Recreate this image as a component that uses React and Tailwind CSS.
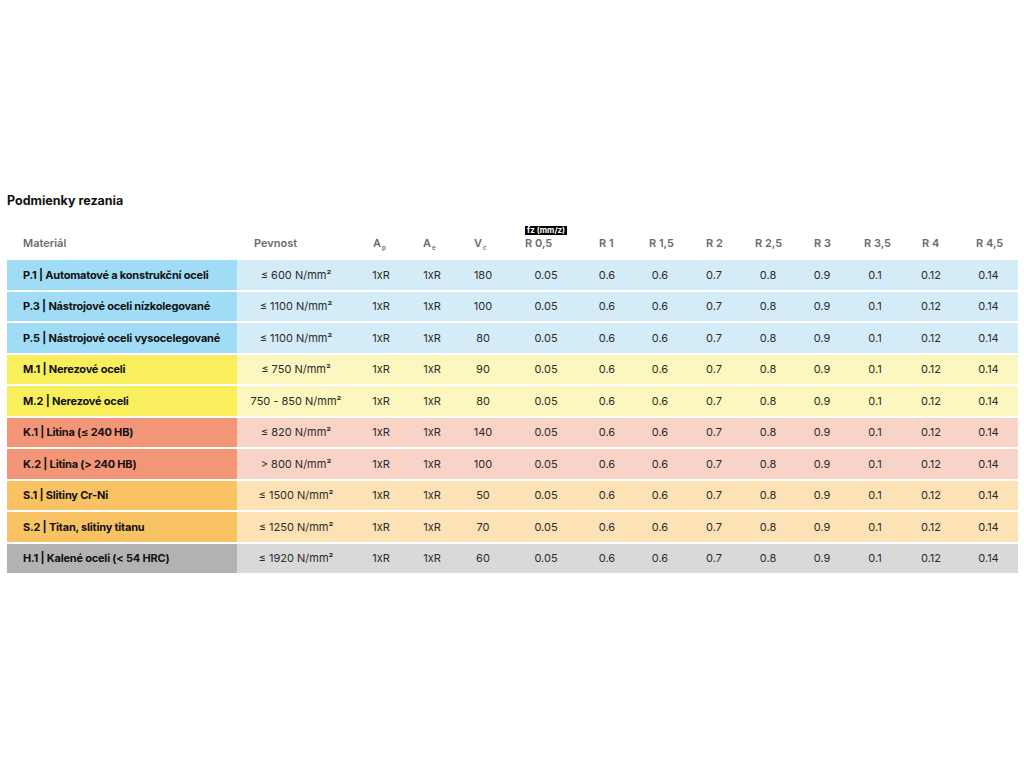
import React from "react";

const COLS =
  "grid grid-cols-[230px_118px_52px_50px_52px_74px_48px_58px_50px_58px_50px_56px_56px_59px]";

const GROUPS = {
  P: { mat: "bg-[#a0dcf5]", val: "bg-[#d4ecf8]" },
  M: { mat: "bg-[#f9ef5c]", val: "bg-[#fcf7bf]" },
  K: { mat: "bg-[#f39677]", val: "bg-[#f9d3c6]" },
  S: { mat: "bg-[#f9c363]", val: "bg-[#fde2b5]" },
  H: { mat: "bg-[#b2b2b2]", val: "bg-[#d9d9d9]" },
};

const FZ = ["0.05", "0.6", "0.6", "0.7", "0.8", "0.9", "0.1", "0.12", "0.14"];

const ROWS = [
  { g: "P", name: "P.1 | Automatové a konstrukční oceli", strength: "≤ 600 N/mm²", vc: "180" },
  { g: "P", name: "P.3 | Nástrojové oceli nízkolegované", strength: "≤ 1100 N/mm²", vc: "100" },
  { g: "P", name: "P.5 | Nástrojové oceli vysocelegované", strength: "≤ 1100 N/mm²", vc: "80" },
  { g: "M", name: "M.1 | Nerezové oceli", strength: "≤ 750 N/mm²", vc: "90" },
  { g: "M", name: "M.2 | Nerezové oceli", strength: "750 - 850 N/mm²", vc: "80" },
  { g: "K", name: "K.1 | Litina (≤ 240 HB)", strength: "≤ 820 N/mm²", vc: "140" },
  { g: "K", name: "K.2 | Litina (> 240 HB)", strength: "> 800 N/mm²", vc: "100" },
  { g: "S", name: "S.1 | Slitiny Cr-Ni", strength: "≤ 1500 N/mm²", vc: "50" },
  { g: "S", name: "S.2 | Titan, slitiny titanu", strength: "≤ 1250 N/mm²", vc: "70" },
  { g: "H", name: "H.1 | Kalené oceli (< 54 HRC)", strength: "≤ 1920 N/mm²", vc: "60" },
];

const R_HEADERS = ["R 1", "R 1,5", "R 2", "R 2,5", "R 3", "R 3,5", "R 4", "R 4,5"];
const R_PAD = ["pl-4", "pl-[18px]", "pl-[17px]", "pl-4", "pl-[17px]", "pl-[17px]", "pl-[19px]", "pl-[17px]"];

const Sub = ({ base, sub }) => (
  <span>
    {base}
    <sub className="text-[6px] align-baseline relative top-[3px] ml-[1px]">{sub}</sub>
  </span>
);

export default function App() {
  return (
    <div
      className="h-screen bg-white flex flex-col justify-center px-[7px] pb-[2px]"
      style={{ fontFamily: "Inter, 'Liberation Sans', sans-serif" }}
    >
      <h2 className="text-[12.5px] font-bold text-[#111] leading-[16px]">
        Podmienky rezania
      </h2>

      {/* Header */}
      <div
        className={`${COLS} mt-[17px] h-[32px] items-end pb-[9px] text-[11px] font-semibold text-[#6b6b6b] leading-[12px]`}
      >
        <div className="pl-4">Materiál</div>
        <div className="pl-[17px]">Pevnost</div>
        <div className="pl-[18px]"><Sub base="A" sub="p" /></div>
        <div className="pl-4"><Sub base="A" sub="e" /></div>
        <div className="pl-[17px]"><Sub base="V" sub="c" /></div>
        <div className="pl-4 flex flex-col items-start">
          <span className="bg-black text-white text-[8px] font-bold leading-[9px] px-[2px] mb-[2px] whitespace-nowrap">
            fz (mm/z)
          </span>
          <span>R 0,5</span>
        </div>
        {R_HEADERS.map((h, i) => (
          <div key={h} className={R_PAD[i]}>
            {h}
          </div>
        ))}
      </div>

      {/* Body */}
      <div className="mt-[2px] flex flex-col gap-[2px]">
        {ROWS.map((r) => {
          const c = GROUPS[r.g];
          return (
            <div
              key={r.name}
              className={`${COLS} h-[29.5px] items-stretch text-[11px] leading-[12px] text-[#2b2b2b]`}
            >
              <div className={`${c.mat} pl-4 flex items-center font-bold text-[#111] text-[11px] whitespace-nowrap tracking-[-0.2px]`}>
                {r.name}
              </div>
              <div className={`${c.val} flex items-center justify-center whitespace-nowrap`}>
                {r.strength}
              </div>
              <div className={`${c.val} flex items-center justify-center`}>1xR</div>
              <div className={`${c.val} flex items-center justify-center`}>1xR</div>
              <div className={`${c.val} flex items-center justify-center`}>{r.vc}</div>
              {FZ.map((v, i) => (
                <div key={i} className={`${c.val} flex items-center justify-center`}>
                  {v}
                </div>
              ))}
            </div>
          );
        })}
      </div>
    </div>
  );
}
